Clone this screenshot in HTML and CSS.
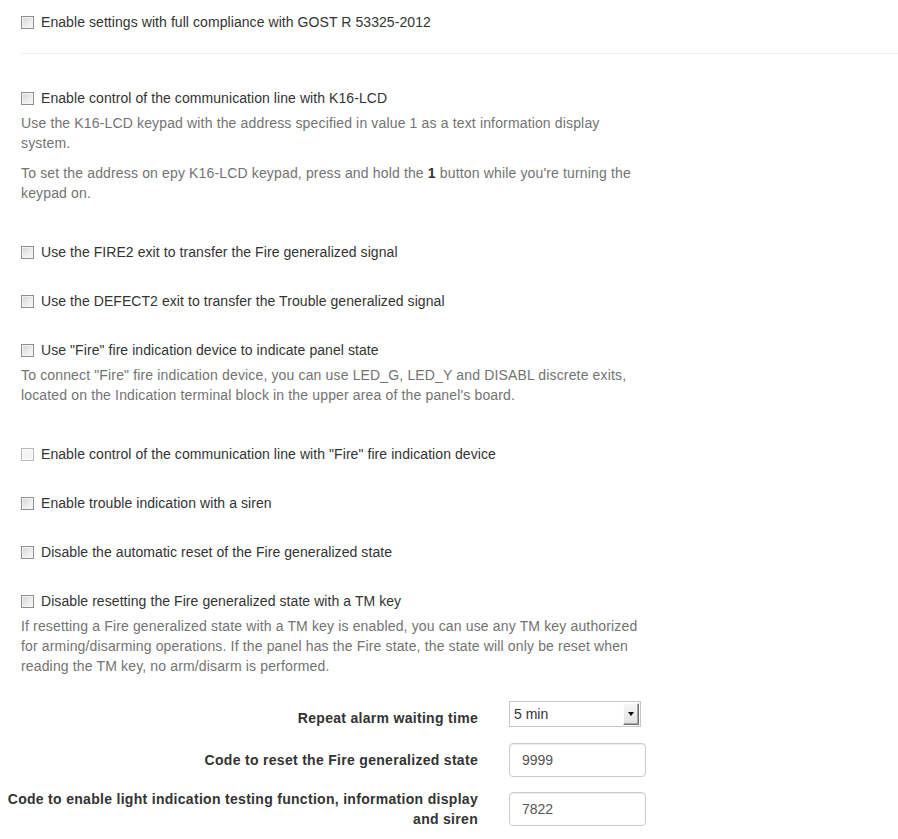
FILE: index.html
```html
<!DOCTYPE html>
<html lang="en">
<head>
<meta charset="utf-8">
<title>Settings</title>
<link rel="stylesheet" href="styles.css">
</head>
<body>
<div class="page">
  <div class="opt"><span class="cb"></span><span>Enable settings with full compliance with GOST R 53325-2012</span></div>
  <div class="sep"></div>

  <div class="group tall first">
    <div class="opt"><span class="cb"></span><span>Enable control of the communication line with K16-LCD</span></div>
    <p class="help">Use the K16-LCD keypad with the address specified in value 1 as a text information display system.</p>
    <p class="help second">To set the address on epy K16-LCD keypad, press and hold the <b>1</b> button while you're turning the keypad on.</p>
  </div>

  <div class="group">
    <div class="opt"><span class="cb"></span><span>Use the FIRE2 exit to transfer the Fire generalized signal</span></div>
  </div>

  <div class="group">
    <div class="opt"><span class="cb"></span><span>Use the DEFECT2 exit to transfer the Trouble generalized signal</span></div>
  </div>

  <div class="group tall">
    <div class="opt"><span class="cb"></span><span>Use "Fire" fire indication device to indicate panel state</span></div>
    <p class="help">To connect "Fire" fire indication device, you can use LED_G, LED_Y and DISABL discrete exits, located on the Indication terminal block in the upper area of the panel's board.</p>
  </div>

  <div class="group">
    <div class="opt"><span class="cb disabled"></span><span>Enable control of the communication line with "Fire" fire indication device</span></div>
  </div>

  <div class="group">
    <div class="opt"><span class="cb"></span><span>Enable trouble indication with a siren</span></div>
  </div>

  <div class="group">
    <div class="opt"><span class="cb"></span><span>Disable the automatic reset of the Fire generalized state</span></div>
  </div>

  <div class="group tall">
    <div class="opt"><span class="cb"></span><span>Disable resetting the Fire generalized state with a TM key</span></div>
    <p class="help">If resetting a Fire generalized state with a TM key is enabled, you can use any TM key authorized for arming/disarming operations. If the panel has the Fire state, the state will only be reset when reading the TM key, no arm/disarm is performed.</p>
  </div>
</div>

<div class="form">
  <div class="frow r1">
    <label class="flabel">Repeat alarm waiting time</label>
    <div class="select"><span class="sel-text">5 min</span><span class="sel-btn"><span class="arrow"></span></span></div>
  </div>
  <div class="frow r2">
    <label class="flabel">Code to reset the Fire generalized state</label>
    <div class="input">9999</div>
  </div>
  <div class="frow r3">
    <label class="flabel">Code to enable light indication testing function, information display and siren</label>
    <div class="input">7822</div>
  </div>
</div>
</body>
</html>
```

FILE: styles.css
```css
html, body {
  margin: 0;
  padding: 0;
  background: #fff;
}
body {
  font-family: "Liberation Sans", Arial, sans-serif;
  font-size: 14px;
  line-height: 20px;
  color: #333;
}
.page {
  padding: 12px 0 0 21px;
}
.opt {
  display: flex;
  align-items: center;
  height: 20px;
  white-space: nowrap;
  letter-spacing: 0.07px;
}
.cb {
  box-sizing: border-box;
  width: 13px;
  height: 13px;
  margin: 1px 7px 0 0;
  border: 1px solid #8f8f8f;
  background: linear-gradient(135deg, #d2d2d2 0%, #eeeeee 60%, #f8f8f8 100%);
  box-shadow: inset 0 0 0 1px #f4f4f4;
  flex: none;
}
.cb.disabled {
  border-color: #b8b8b8;
  background: #f4f4f4;
  box-shadow: inset 0 0 0 1px #fafafa;
}
.sep {
  height: 1px;
  background: #eee;
  margin: 21px 0 34px 0;
}
.group {
  margin-top: 29px;
}
.group.first {
  margin-top: 0;
}
.group.tall {
  padding-bottom: 10px;
}
.help {
  width: 619px;
  margin: 5px 0 0 0;
  color: #737373;
  letter-spacing: 0.15px;
}
.help.second {
  margin-top: 10px;
}
.help b {
  color: #333;
}
.form {
  margin-top: 15px;
}
.frow {
  display: grid;
  grid-template-columns: 478px auto;
  column-gap: 31px;
  align-items: center;
  justify-items: start;
}
.flabel {
  justify-self: stretch;
  text-align: right;
  font-weight: bold;
  color: #333;
  letter-spacing: 0.3px;
}
.r1 {
  min-height: 34px;
}
.r1 .select {
  align-self: start;
}
.r2 {
  margin-top: 8px;
}
.r3 {
  margin-top: 12px;
}
.select {
  box-sizing: border-box;
  position: relative;
  width: 132px;
  height: 26px;
  border: 1px solid #c6c6c6;
  background: #fff;
  display: flex;
  align-items: center;
}
.sel-text {
  padding-left: 4px;
  color: #333;
}
.sel-btn {
  position: absolute;
  top: 1px;
  right: 1px;
  box-sizing: border-box;
  width: 16px;
  height: 22px;
  border-top: 1px solid #fdfdfd;
  border-left: 1px solid #fdfdfd;
  border-right: 1px solid #707070;
  border-bottom: 1px solid #707070;
  background: linear-gradient(#f6f6f6, #e2e2e2);
  box-shadow: inset -1px -1px 0 #a8a8a8;
  display: flex;
  align-items: center;
  justify-content: center;
}
.arrow {
  width: 0;
  height: 0;
  border-left: 3.5px solid transparent;
  border-right: 3.5px solid transparent;
  border-top: 4px solid #000;
}
.input {
  box-sizing: border-box;
  width: 137px;
  height: 34px;
  padding: 6px 12px;
  border: 1px solid #ccc;
  border-radius: 4px;
  color: #555;
  line-height: 20px;
  box-shadow: inset 0 1px 1px rgba(0,0,0,0.075);
}
```
